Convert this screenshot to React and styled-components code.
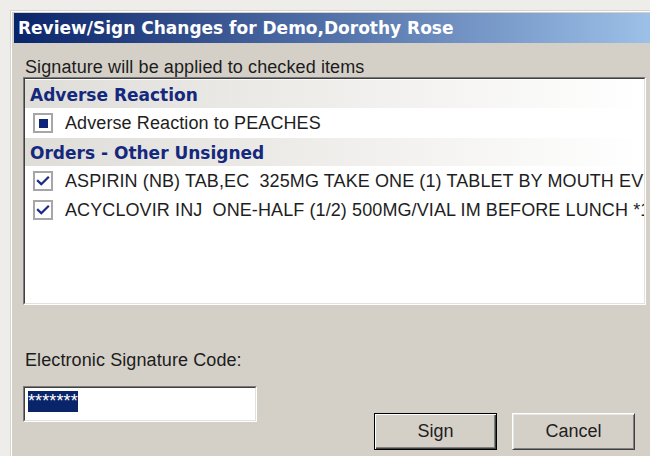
import React from "react";
import styled, { createGlobalStyle } from "styled-components";

const GlobalStyle = createGlobalStyle`
  html, body {
    margin: 0;
    padding: 0;
    background: #efede9;
    overflow: hidden;
  }
  body {
    font-family: "Liberation Sans", Arial, sans-serif;
  }
`;

const Page = styled.div`
  width: 650px;
  height: 456px;
  overflow: hidden;
  box-sizing: border-box;
  padding: 10px 0 0 10px;
`;

const Window = styled.div`
  width: 680px;
  height: 460px;
  box-sizing: border-box;
  background: #d4d0c8;
  border-top: 1px solid #d8d5ce;
  border-left: 1px solid #d8d5ce;
  box-shadow: inset 1px 1px #ffffff;
  padding: 2px 0 0 3px;
  display: flex;
  flex-direction: column;
`;

const TitleBar = styled.div`
  height: 30px;
  display: flex;
  align-items: center;
  padding-left: 4px;
  background: linear-gradient(90deg, #0a246a 0%, #a6caf0 100%);
  color: #ffffff;
  font-family: "DejaVu Sans", Verdana, sans-serif;
  font-weight: bold;
  font-size: 17px;
  white-space: nowrap;
`;

const Body = styled.div`
  display: flex;
  flex-direction: column;
  padding: 14px 0 0 9px;
`;

const Caption = styled.div`
  font-size: 18px;
  line-height: 20px;
  letter-spacing: 0.1px;
  color: #1c1c1c;
  margin-left: 2px;
  white-space: nowrap;
`;

/* classic two-line sunken frame */
const SunkenOuter = styled.div`
  box-sizing: border-box;
  width: ${(p) => p.$w}px;
  height: ${(p) => p.$h}px;
  border: 1px solid;
  border-color: #7a7a7a #ffffff #ffffff #7a7a7a;
  margin-top: ${(p) => p.$top || 0}px;
`;

const SunkenInner = styled.div`
  box-sizing: border-box;
  height: 100%;
  border: 1px solid;
  border-color: #404040 #e4e1dc #e4e1dc #404040;
  background: #ffffff;
  overflow: hidden;
`;

const RowList = styled.div`
  display: flex;
  flex-direction: column;
  gap: 1px;
  padding-top: 1px;
`;

const GroupHeader = styled.div`
  height: 28px;
  display: flex;
  align-items: center;
  padding-left: 5px;
  padding-top: 1px;
  box-sizing: border-box;
  background: linear-gradient(90deg, #dfddd8 0%, #ffffff 100%);
  color: #14287e;
  font-family: "DejaVu Sans", Verdana, sans-serif;
  font-weight: bold;
  font-size: 17px;
  white-space: nowrap;
`;

const ItemRow = styled.div`
  height: 28px;
  display: flex;
  align-items: center;
  gap: 12px;
  padding-left: 8px;
  white-space: pre;
`;

const CheckBox = styled.span`
  flex: none;
  width: 20px;
  height: 20px;
  box-sizing: border-box;
  border: 2px solid #a6a6a6;
  background: #ffffff;
  display: flex;
  align-items: center;
  justify-content: center;
`;

const PartialMark = styled.span`
  width: 9px;
  height: 9px;
  background: #0f2377;
`;

const ItemText = styled.span`
  font-size: 18px;
  letter-spacing: 0.1px;
  color: #1e1e1e;
`;

const BottomRow = styled.div`
  width: 623px;
  box-sizing: border-box;
  display: flex;
  justify-content: space-between;
  align-items: flex-start;
  padding-right: 11px;
  margin-top: 45px;
`;

const FieldColumn = styled.div`
  display: flex;
  flex-direction: column;
`;

const FieldText = styled.div`
  padding: 3px 0 0 3px;
`;

const Selected = styled.span`
  display: inline-block;
  background: #0a246a;
  color: #ffffff;
  font-size: 18px;
  line-height: 21px;
  letter-spacing: 0.1px;
`;

const ButtonBar = styled.div`
  display: flex;
  gap: 15px;
  margin-top: 63px;
`;

const Button = styled.button`
  box-sizing: border-box;
  width: 123px;
  height: 37px;
  padding: 0;
  background: #d4d0c8;
  font-family: "Liberation Sans", Arial, sans-serif;
  font-size: 18px;
  color: #1e1e1e;
  border: 1px solid;
  border-color: ${(p) =>
    p.$default ? "#000000" : "#ffffff #404040 #404040 #ffffff"};
  box-shadow: ${(p) =>
    p.$default
      ? "inset 1px 1px #ffffff, inset -1px -1px #404040, inset -2px -2px #808080"
      : "inset 1px 1px #e8e6e2, inset -1px -1px #808080"};
`;

const Check = () => (
  <svg width="14" height="14" viewBox="0 0 14 14">
    <path
      d="M2 7 L5.3 10.2 L12 3.6"
      fill="none"
      stroke="#1c2c84"
      strokeWidth="2.3"
      strokeLinecap="square"
    />
  </svg>
);

const groups = [
  {
    title: "Adverse Reaction",
    items: [{ text: "Adverse Reaction to PEACHES", state: "partial" }],
  },
  {
    title: "Orders - Other Unsigned",
    items: [
      {
        text: "ASPIRIN (NB) TAB,EC  325MG TAKE ONE (1) TABLET BY MOUTH EVERY DAY",
        state: "checked",
      },
      {
        text: "ACYCLOVIR INJ  ONE-HALF (1/2) 500MG/VIAL IM BEFORE LUNCH *1 DOSE*",
        state: "checked",
      },
    ],
  },
];

export default function App() {
  return (
    <>
      <GlobalStyle />
      <Page>
        <Window>
          <TitleBar>Review/Sign Changes for Demo,Dorothy Rose</TitleBar>
          <Body>
            <Caption>Signature will be applied to checked items</Caption>
            <SunkenOuter $w={623} $h={228}>
              <SunkenInner>
                <RowList>
                  {groups.map((g) => (
                    <React.Fragment key={g.title}>
                      <GroupHeader>{g.title}</GroupHeader>
                      {g.items.map((it) => (
                        <ItemRow key={it.text}>
                          <CheckBox>
                            {it.state === "partial" ? <PartialMark /> : <Check />}
                          </CheckBox>
                          <ItemText>{it.text}</ItemText>
                        </ItemRow>
                      ))}
                    </React.Fragment>
                  ))}
                </RowList>
              </SunkenInner>
            </SunkenOuter>
            <BottomRow>
              <FieldColumn>
                <Caption>Electronic Signature Code:</Caption>
                <SunkenOuter $w={234} $h={36} $top={16}>
                  <SunkenInner>
                    <FieldText>
                      <Selected>*******</Selected>
                    </FieldText>
                  </SunkenInner>
                </SunkenOuter>
              </FieldColumn>
              <ButtonBar>
                <Button $default>Sign</Button>
                <Button>Cancel</Button>
              </ButtonBar>
            </BottomRow>
          </Body>
        </Window>
      </Page>
    </>
  );
}
